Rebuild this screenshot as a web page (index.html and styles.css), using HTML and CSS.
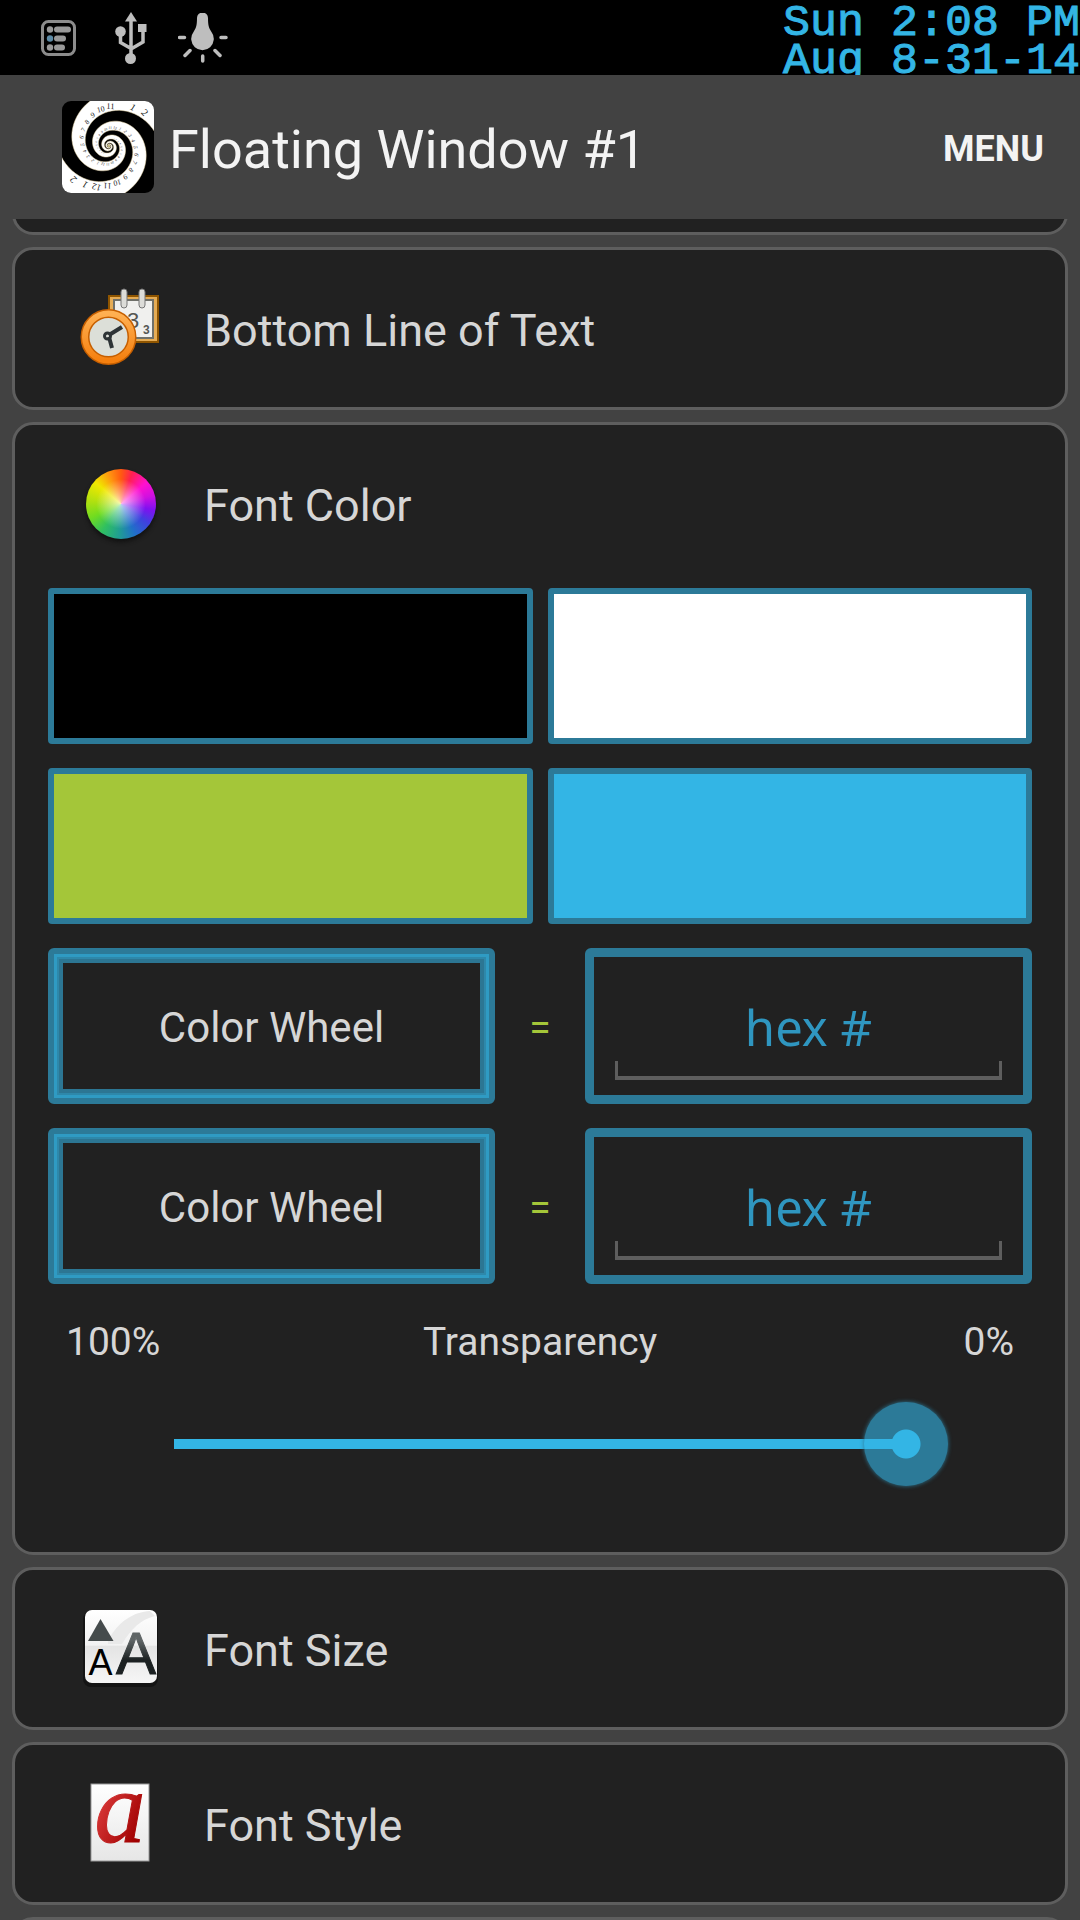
FILE: index.html
```html
<!DOCTYPE html>
<html lang="en">
<head>
    <meta charset="UTF-8">
    <meta name="viewport" content="width=device-width, initial-scale=1.0">
    <title>Floating Window #1</title>
    <link rel="stylesheet" href="styles.css">
</head>
<body>
    <div class="status-bar">
        <svg class="status-icon-list" width="35" height="36" viewBox="0 0 35 36">
            <rect x="1.5" y="1.5" width="32" height="33" rx="6" fill="none" stroke="#8c8c8c" stroke-width="3"/>
            <g fill="#999">
                <circle cx="9" cy="9.500" r="3.200"/>
                <circle cx="9" cy="18.500" r="3.200" fill="#5d8ba6"/>
                <circle cx="9" cy="27.500" r="3.200"/>
                <rect x="13" y="6.500" width="17" height="6" rx="3"/>
                <rect x="13" y="15.500" width="12" height="6" rx="3"/>
                <rect x="13" y="24.500" width="11" height="6" rx="3"/>
            </g>
        </svg>
        <svg class="status-icon-usb" width="32" height="52" viewBox="0 0 32 52">
            <g fill="#bebebe">
                <path d="M10 9.500 16 0l6 9.500z"/>
                <circle cx="5.500" cy="19.500" r="5.300"/>
                <rect x="23" y="12" width="8.500" height="8"/>
                <circle cx="15.500" cy="46.500" r="5.500"/>
            </g>
            <path d="M16 8v36M5.500 22v8.500l10.500 6M28 19v11l-12 7" fill="none" stroke="#bebebe" stroke-width="3.500"/>
        </svg>
        <svg class="status-icon-bulb" width="50" height="50" viewBox="0 0 50 50">
            <path d="M19 5a5.500 5.500 0 0 1 11 0c0 8 1 10 3.500 14a11.300 11.300 0 1 1-18 0C18 15 19 13 19 5z" fill="#bebebe"/>
            <path d="M1.500 24.500h5M43 24.500h5M12 37.500l-5 5M37 37.500l5 5M24.700 43v5" stroke="#bebebe" stroke-width="3.500" stroke-linecap="round"/>
        </svg>
        <div class="clock">
            <div>Sun 2:08 PM</div>
            <div>Aug 8-31-14</div>
        </div>
    </div>

    <header class="action-bar">
        <svg class="app-icon" viewBox="0 0 92 92" aria-hidden="true">
            <clipPath id="icon-shape"><rect width="92" height="92" rx="9"/></clipPath>
            <g id="spiral" clip-path="url(#icon-shape)">
                <rect width="92" height="92" fill="#000"/>
            </g>
        </svg>
        <h1>Floating Window #1</h1>
        <button class="menu-button">MENU</button>
    </header>

    <main>
        <section class="card card-scrolled"></section>

        <section class="card">
            <button class="card-title">
                <svg class="card-icon" viewBox="0 0 85 85">
                    <defs>
                        <linearGradient id="ring" x2="0" y2="1">
                            <stop offset="0" stop-color="#ffb052"/>
                            <stop offset="1" stop-color="#f5800f"/>
                        </linearGradient>
                    </defs>
                    <rect x="31" y="10" width="49" height="46" fill="#e5ac55" stroke="#8f5500" stroke-width="2"/>
                    <rect x="36" y="14" width="39" height="38" fill="#f0f0ee" stroke="#6f706a" stroke-width="2"/>
                    <text x="49" y="42" class="cal-big">3</text>
                    <text x="65" y="48" class="cal-small">3</text>
                    <rect x="43" y="3" width="6" height="19" rx="3" fill="#dcdcd8" stroke="#777" stroke-width="1"/>
                    <rect x="61" y="3" width="6" height="19" rx="3" fill="#dcdcd8" stroke="#777" stroke-width="1"/>
                    <circle cx="30.500" cy="51" r="23.500" fill="#dcdfd8" stroke="#c65f00" stroke-width="9"/>
                    <circle cx="30.500" cy="51" r="23.500" fill="none" stroke="url(#ring)" stroke-width="6"/>
                    <circle cx="29.500" cy="50" r="3" fill="none" stroke="#2e3436" stroke-width="3"/>
                    <path d="M31 49l13-8M31 51l3 11" stroke="#2e3436" stroke-width="4"/>
                </svg>
                <span>Bottom Line of Text</span>
            </button>
        </section>

        <section class="card">
            <button class="card-title">
                <span class="card-icon"><span class="color-wheel"></span></span>
                <span>Font Color</span>
            </button>
            <div class="color-panel">
                <div class="swatches">
                    <button class="swatch black" aria-label="Black"></button>
                    <button class="swatch white" aria-label="White"></button>
                    <button class="swatch green" aria-label="Green"></button>
                    <button class="swatch blue" aria-label="Blue"></button>
                </div>
                <div class="wheel-row">
                    <button class="wheel-button">Color Wheel</button>
                    <span class="equals">=</span>
                    <div class="hex-box"><input type="text" placeholder="hex #" aria-label="hex #"></div>
                </div>
                <div class="wheel-row">
                    <button class="wheel-button">Color Wheel</button>
                    <span class="equals">=</span>
                    <div class="hex-box"><input type="text" placeholder="hex #" aria-label="hex #"></div>
                </div>
                <div class="slider-labels">
                    <span>100%</span>
                    <label for="transparency">Transparency</label>
                    <span>0%</span>
                </div>
                <input type="range" id="transparency" class="slider" min="0" max="100" value="100">
            </div>
        </section>

        <section class="card">
            <button class="card-title">
                <svg class="card-icon" viewBox="0 0 85 85">
                    <defs>
                        <linearGradient id="tile" x2="0" y2="1">
                            <stop offset="0" stop-color="#fff"/>
                            <stop offset="0.480" stop-color="#f2f2f2"/>
                            <stop offset="0.500" stop-color="#e4e4e4"/>
                            <stop offset="1" stop-color="#f6f6f6"/>
                        </linearGradient>
                        <linearGradient id="ink" x2="0" y2="1">
                            <stop offset="0.300" stop-color="#5f6566"/>
                            <stop offset="0.600" stop-color="#1c2122"/>
                        </linearGradient>
                    </defs>
                    <rect x="5" y="5" width="75" height="76" rx="8" fill="#141414"/>
                    <rect x="7" y="4" width="72" height="73" rx="7" fill="url(#tile)"/>
                    <path d="M30 35C40 15 56 6 72 5l5 5C62 14 54 22 44 38H30z" fill="#e9e9e9"/>
                    <path d="M22.500 13 35.500 35H10z" fill="#454b4c"/>
                    <text x="22.500" y="68.500" class="size-small">A</text>
                    <text x="58" y="68" class="size-big">A</text>
                </svg>
                <span>Font Size</span>
            </button>
        </section>

        <section class="card">
            <button class="card-title">
                <svg class="card-icon" viewBox="0 0 85 85">
                    <defs>
                        <linearGradient id="red" x2="1" y2="1">
                            <stop offset="0.200" stop-color="#e04040"/>
                            <stop offset="0.800" stop-color="#a00000"/>
                        </linearGradient>
                        <linearGradient id="paper" x2="0" y2="1">
                            <stop offset="0" stop-color="#fff"/>
                            <stop offset="1" stop-color="#e6e6e6"/>
                        </linearGradient>
                    </defs>
                    <rect x="13" y="3" width="58" height="77" fill="url(#paper)" stroke="#999" stroke-width="1"/>
                    <text x="42" y="61" class="style-letter">a</text>
                </svg>
                <span>Font Style</span>
            </button>
        </section>

        <section class="card"></section>
    </main>

    <script>
        // two white arms of a logarithmic spiral with clock numerals on them
        const spiral = document.getElementById('spiral');
        const ns = 'http://www.w3.org/2000/svg';
        const cx = 47, cy = 45, growth = 0.258;

        function point(r0, angle, turn) {
            const r = r0 * Math.exp(growth * (angle - Math.PI));
            return [cx + r * Math.cos(angle + turn), cy + r * Math.sin(angle + turn), r];
        }

        [0, Math.PI].forEach(turn => {
            const outer = [];
            const inner = [];
            for (let a = -5 * Math.PI; a < 2.6 * Math.PI; a += 0.1) {
                outer.push(point(36, a, turn).slice(0, 2).join(' '));
                inner.push(point(23, a, turn).slice(0, 2).join(' '));
            }
            const arm = document.createElementNS(ns, 'path');
            arm.setAttribute('d', 'M' + outer.concat(inner.reverse()).join('L') + 'z');
            arm.setAttribute('class', 'spiral-arm');
            spiral.appendChild(arm);

            for (let i = 0; i < 26; i++) {
                const a = 1.76 * Math.PI - i * 0.26;
                const [x, y, r] = point(26.5, a, turn);
                // skip numerals that would leave the icon
                if (x < 4 || x > 88 || y < 4 || y > 88) continue;
                const number = document.createElementNS(ns, 'text');
                const deg = (a + turn) * 180 / Math.PI + 90;
                number.setAttribute('transform', `translate(${x} ${y}) rotate(${deg})`);
                number.setAttribute('font-size', r * 0.21);
                number.setAttribute('class', 'spiral-number');
                number.textContent = (25 - i) % 12 + 1;
                spiral.appendChild(number);
            }
        });
    </script>
</body>
</html>
```
FILE: styles.css
```css
* {
    box-sizing: border-box;
}
body {
    margin: 0;
    height: 100vh;
    display: flex;
    flex-direction: column;
    overflow: hidden;
    background-color: #424242;
    color: #d6d6d6;
    font-family: Roboto, sans-serif;
}
button {
    margin: 0;
    padding: 0;
    border: none;
    background: none;
    color: inherit;
    font-family: inherit;
    cursor: pointer;
}
svg {
    display: block;
    flex: none;
}

/* status bar */
.status-bar {
    flex: none;
    display: flex;
    align-items: center;
    height: 75px;
    padding-left: 41px;
    overflow: hidden;
    background-color: #000;
}
.status-icon-usb {
    margin-left: 39px;
}
.status-icon-bulb {
    margin-left: 31px;
}
.clock {
    align-self: flex-start;
    margin-left: auto;
    padding-top: 5px;
    color: #33b5e5;
    font-family: "Liberation Mono", monospace;
    font-size: 45px;
    line-height: 38px;
    white-space: nowrap;
    -webkit-text-stroke: 1px #33b5e5;
}

/* action bar */
.action-bar {
    flex: none;
    display: flex;
    align-items: center;
    height: 144px;
    padding: 0 36px 0 62px;
    color: #f3f3f3;
}
.app-icon {
    width: 92px;
    height: 92px;
}
.spiral-arm {
    fill: #fff;
    stroke: #e8d6a8;
    stroke-width: 0.5;
}
.spiral-number {
    fill: #222;
    font-family: "Liberation Serif", serif;
    text-anchor: middle;
    dominant-baseline: central;
}
h1 {
    margin: 0 auto 0 15px;
    padding-top: 4px;
    font-size: 54px;
    font-weight: 400;
}
.menu-button {
    padding-top: 4px;
    font-size: 36px;
    font-weight: 700;
}

/* cards */
main {
    flex: 1;
    min-height: 0;
    overflow: hidden;
    padding: 0 12px;
}
.card {
    min-height: 163px;
    margin-bottom: 12px;
    border: 3px solid #5e5e5e;
    border-radius: 21px;
    background-color: #212121;
}
.card-scrolled {
    margin-top: -147px;
}
.card-title {
    display: flex;
    align-items: center;
    gap: 41px;
    width: 100%;
    height: 157px;
    padding-left: 63px;
    font-size: 45px;
}
.card-title > span:last-child {
    padding-top: 4px;
}
.card-icon {
    flex: none;
    display: flex;
    align-items: center;
    justify-content: center;
    width: 85px;
    height: 85px;
}
.cal-big {
    fill: #555753;
    font: 22px "Liberation Sans", sans-serif;
}
.cal-small {
    fill: #555753;
    font: bold 12px "Liberation Sans", sans-serif;
}
.size-small {
    fill: #000;
    font: 36px "Liberation Sans", sans-serif;
    text-anchor: middle;
}
.size-big {
    fill: url(#ink);
    font: 60px "Liberation Sans", sans-serif;
    text-anchor: middle;
    stroke: url(#ink);
    stroke-width: 1;
}
.style-letter {
    fill: url(#red);
    font: italic 102px "Liberation Serif", serif;
    text-anchor: middle;
    stroke: url(#red);
    stroke-width: 1;
}
.color-wheel {
    width: 70px;
    height: 70px;
    border-radius: 50%;
    box-shadow: 0 3px 4px #111;
    background: radial-gradient(circle, rgba(255, 255, 255, 0.7) 0%, rgba(255, 255, 255, 0) 50%),
        conic-gradient(#ff5a10, #ff2050 20deg, #ff10d0 50deg, #d010e0 75deg, #8010f0 100deg, #4040e0 125deg, #2070c8 155deg, #20a090 185deg, #30c060 215deg, #70dc20 245deg, #b0e010 275deg, #f0e800 310deg, #ff9010 340deg, #ff5a10);
}

/* font color panel */
.color-panel {
    padding: 6px 33px 66px;
}
.swatches {
    display: grid;
    grid-template-columns: 1fr 1fr;
    gap: 24px 15px;
}
.swatch {
    height: 156px;
    border: 6px solid #2c7a98;
    border-radius: 4px;
}
.black {
    background-color: #000;
}
.white {
    background-color: #fff;
}
.green {
    background-color: #a4c639;
}
.blue {
    background-color: #33b5e5;
}
.wheel-row {
    display: grid;
    grid-template-columns: 1fr 90px 1fr;
    height: 156px;
    margin-top: 24px;
}
.wheel-button {
    padding-top: 2px;
    border: 6px solid #2c7a98;
    border-radius: 6px;
    box-shadow: inset 0 0 0 3px #2f9bc3, inset 0 0 0 5px #2e88aa, inset 0 0 0 9px #2c7693;
    font-size: 42px;
}
.equals {
    align-self: center;
    padding-top: 4px;
    color: #a4c639;
    font-size: 39px;
    text-align: center;
}
.hex-box {
    padding: 0 21px;
    border: 9px solid #2c7a98;
    border-radius: 6px;
}
.hex-box input {
    display: block;
    width: 100%;
    height: 123px;
    padding: 20px 0 0;
    border: none;
    border-bottom: 4px solid #5e5e5e;
    background: linear-gradient(#5e5e5e, #5e5e5e) left bottom / 3px 15px no-repeat,
        linear-gradient(#5e5e5e, #5e5e5e) right bottom / 3px 15px no-repeat;
    color: #2f96c0;
    font-family: "Noto Sans", sans-serif;
    font-size: 49px;
    text-align: center;
    outline: none;
}
.hex-box input::placeholder {
    color: #2f96c0;
    opacity: 1;
}
.slider-labels {
    display: flex;
    justify-content: space-between;
    margin-top: 35px;
    padding: 0 18px;
    font-size: 39px;
    line-height: 46px;
}
.slider-labels span {
    flex: 1;
}
.slider-labels span:last-child {
    text-align: right;
}
.slider {
    -webkit-appearance: none;
    appearance: none;
    display: block;
    width: calc(100% - 168px);
    height: 84px;
    margin: 37px 84px 0;
    background: linear-gradient(#33b5e5, #33b5e5) center / calc(100% - 84px) 10px no-repeat;
}
.slider::-webkit-slider-thumb {
    -webkit-appearance: none;
    width: 84px;
    height: 84px;
    border-radius: 50%;
    box-shadow: 0 0 4px #2c7a98;
    background: radial-gradient(circle, #33b5e5 14px, transparent 15px),
        linear-gradient(#33b5e5, #33b5e5) left center / 42px 10px no-repeat,
        #2c7a98;
}
```
